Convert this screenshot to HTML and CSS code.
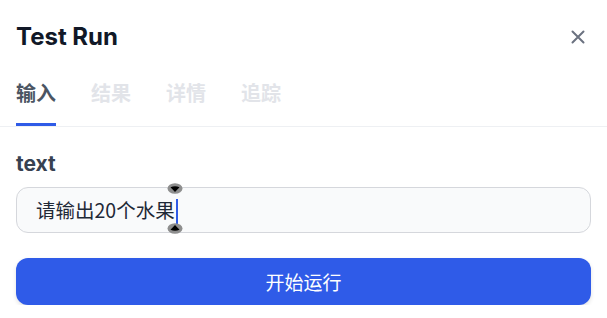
FILE: index.html
```html
<!DOCTYPE html>
<html lang="zh">

<head>
    <meta charset="UTF-8">
    <meta name="viewport" content="width=device-width, initial-scale=1.0">
    <title>Test Run</title>
    <link rel="stylesheet" href="styles.css">
</head>

<body>
    <div class="panel">
        <div class="header">
            <h2 class="title">Test Run</h2>
            <button class="close" aria-label="close">
                <svg width="14" height="14" viewBox="0 0 14 14">
                    <path d="M1.5 1.5 L12.5 12.5 M12.5 1.5 L1.5 12.5" stroke="#6b7280" stroke-width="2" stroke-linecap="round" fill="none"/>
                </svg>
            </button>
        </div>

        <div class="tabs">
            <div class="tab active">输入</div>
            <div class="tab">结果</div>
            <div class="tab">详情</div>
            <div class="tab">追踪</div>
        </div>

        <div class="content">
            <label class="field-label">text</label>
            <div class="input-wrap">
                <div class="input">请输出20个水果<span class="caret"></span></div>
                <svg class="handle handle-top" width="16" height="12" viewBox="0 0 16 12">
                    <ellipse cx="8" cy="5.5" rx="7.5" ry="5.2" fill="#8e8e8e"/>
                    <path d="M3.5 4.2 Q8 2.4 12.5 4.2 L8 9 Z" fill="#000"/>
                </svg>
                <svg class="handle handle-bottom" width="16" height="12" viewBox="0 0 16 12">
                    <ellipse cx="8" cy="6.5" rx="7.5" ry="5.2" fill="#8e8e8e"/>
                    <path d="M3.5 7.8 Q8 9.6 12.5 7.8 L8 3 Z" fill="#000"/>
                </svg>
            </div>
            <button class="run">开始运行</button>
        </div>
    </div>
</body>

</html>
```

FILE: styles.css
```css
body {
    margin: 0;
    font-family: Inter, "Noto Sans CJK SC", sans-serif;
    background: #fff;
}

.panel {
    width: 607px;
}

.header {
    display: flex;
    justify-content: space-between;
    align-items: center;
    padding: 20px 16px 0 16px;
    height: 34px;
}

.title {
    margin: 0;
    font-size: 24px;
    font-weight: 700;
    color: #111827;
    line-height: 34px;
}

.close {
    background: none;
    border: none;
    padding: 0;
    width: 14px;
    height: 14px;
    margin-right: 6px;
    display: flex;
    cursor: pointer;
}

.tabs {
    display: flex;
    gap: 35px;
    padding: 0 16px;
    margin-top: 24px;
    border-bottom: 1px solid #eef0f3;
}

.tab {
    font-size: 20px;
    font-weight: 700;
    color: #e2e4e9;
    line-height: 30px;
    padding-bottom: 15px;
    border-bottom: 3px solid transparent;
    font-family: "Noto Sans CJK SC", sans-serif;
}

.tab.active {
    color: #4b5563;
    border-bottom-color: #2f5be7;
}

.content {
    padding: 24px 16px 0 16px;
}

.field-label {
    display: block;
    font-size: 21px;
    font-weight: 700;
    color: #374151;
    line-height: 26px;
}

.input-wrap {
    position: relative;
    margin-top: 10px;
}

.input {
    height: 44px;
    border: 1px solid #d5d7dc;
    border-radius: 12px;
    background: #f9fafb;
    padding: 0 19px;
    font-size: 19.5px;
    line-height: 44px;
    color: #1f2937;
    font-family: "Noto Sans CJK SC", sans-serif;
}

.caret {
    display: inline-block;
    width: 2px;
    height: 27px;
    background: #2f5be7;
    vertical-align: middle;
    margin-left: 1px;
}

.handle {
    position: absolute;
    left: 151px;
}

.handle-top {
    top: -4px;
}

.handle-bottom {
    top: 35px;
}

.run {
    display: block;
    width: 100%;
    height: 47px;
    margin-top: 25px;
    border: none;
    border-radius: 12px;
    background: #2f5be8;
    color: #fff;
    font-size: 19px;
    font-family: "Noto Sans CJK SC", sans-serif;
    box-shadow: 0 2px 4px rgba(0, 0, 0, 0.12);
    cursor: pointer;
}
```
